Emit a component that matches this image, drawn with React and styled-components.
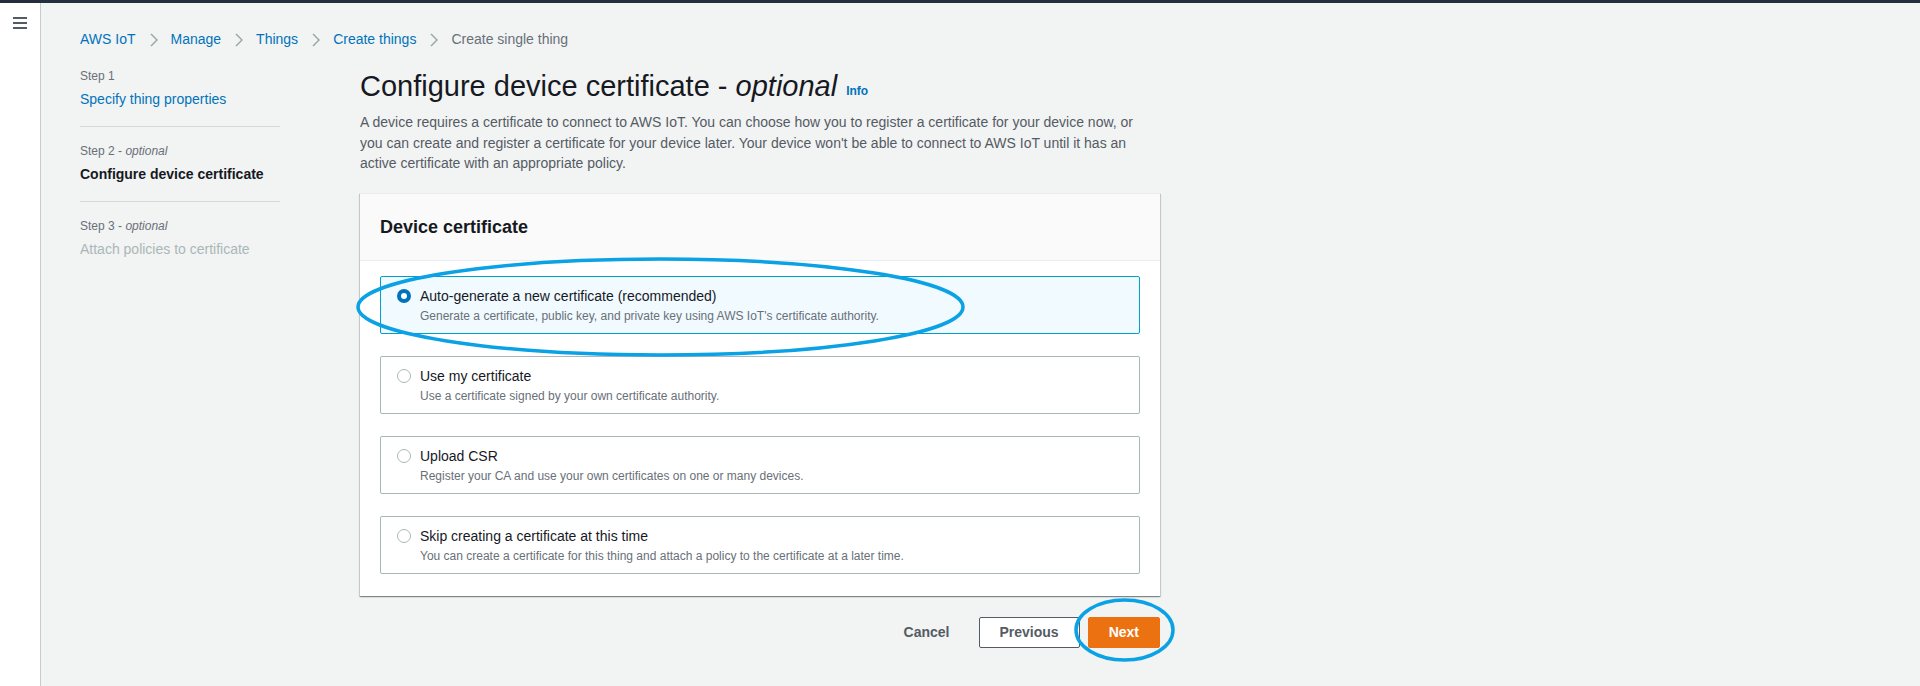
import React from "react";
import styled, { createGlobalStyle, css } from "styled-components";

const GlobalStyle = createGlobalStyle`
  * { box-sizing: border-box; }
  html, body { margin: 0; padding: 0; height: 100%; }
  body {
    background: #f2f3f3;
    color: #16191f;
    font-family: "Liberation Sans", Arial, sans-serif;
    font-size: 14px;
  }
  #root { min-height: 100%; }
`;

const steps = [
  { label: "Step 1", optional: false, title: "Specify thing properties", state: "link" },
  { label: "Step 2", optional: true, title: "Configure device certificate", state: "current" },
  { label: "Step 3", optional: true, title: "Attach policies to certificate", state: "disabled" },
];

const options = [
  {
    title: "Auto-generate a new certificate (recommended)",
    desc: "Generate a certificate, public key, and private key using AWS IoT's certificate authority.",
  },
  {
    title: "Use my certificate",
    desc: "Use a certificate signed by your own certificate authority.",
  },
  {
    title: "Upload CSR",
    desc: "Register your CA and use your own certificates on one or many devices.",
  },
  {
    title: "Skip creating a certificate at this time",
    desc: "You can create a certificate for this thing and attach a policy to the certificate at a later time.",
  },
];

const crumbs = ["AWS IoT", "Manage", "Things", "Create things"];

function Chevron() {
  return (
    <Separator viewBox="0 0 10 14" aria-hidden="true">
      <path d="M2 1 L8 7 L2 13" fill="none" stroke="#95a5a6" strokeWidth="1.4" />
    </Separator>
  );
}

export default function App() {
  const selected = 0;
  return (
    <>
      <GlobalStyle />
      <TopBar />
      <Shell>
        <SideRail>
          <Hamburger aria-label="Open navigation">
            <span />
            <span />
            <span />
          </Hamburger>
        </SideRail>

        <Main>
          <Breadcrumbs>
            {crumbs.map((c) => (
              <React.Fragment key={c}>
                <CrumbLink>{c}</CrumbLink>
                <Chevron />
              </React.Fragment>
            ))}
            <CrumbCurrent>Create single thing</CrumbCurrent>
          </Breadcrumbs>

          <Layout>
            <Nav>
              {steps.map((s, i) => (
                <NavItem key={s.label} $first={i === 0} $last={i === steps.length - 1}>
                  <StepLabel>
                    {s.label}
                    {s.optional && (
                      <>
                        {" - "}
                        <em>optional</em>
                      </>
                    )}
                  </StepLabel>
                  <StepTitle $state={s.state}>{s.title}</StepTitle>
                </NavItem>
              ))}
            </Nav>

            <Content>
              <Heading>
                Configure device certificate - <em>optional</em>
                <InfoLink>Info</InfoLink>
              </Heading>
              <Description>
                A device requires a certificate to connect to AWS IoT. You can choose how you to
                register a certificate for your device now, or you can create and register a
                certificate for your device later. Your device won't be able to connect to AWS IoT
                until it has an active certificate with an appropriate policy.
              </Description>

              <Card>
                <CardHeader>
                  <CardTitle>Device certificate</CardTitle>
                </CardHeader>
                <CardBody>
                  {options.map((o, i) => (
                    <Tile key={o.title} $selected={i === selected}>
                      <Radio $selected={i === selected} />
                      <TileText>
                        <TileTitle>{o.title}</TileTitle>
                        <TileDesc>{o.desc}</TileDesc>
                      </TileText>
                    </Tile>
                  ))}
                </CardBody>
                <Annotation
                  style={{ left: -4, top: 62 }}
                  width="609"
                  height="102"
                  viewBox="0 0 609 102"
                >
                  <ellipse cx="304.5" cy="51" rx="302.5" ry="48" />
                </Annotation>
              </Card>

              <Actions>
                <Button $variant="link">Cancel</Button>
                <Button $variant="normal">Previous</Button>
                <Marked>
                  <Button $variant="primary">Next</Button>
                  <Annotation
                    style={{ left: -14, top: -19 }}
                    width="101"
                    height="64"
                    viewBox="0 0 101 64"
                  >
                    <ellipse cx="50.5" cy="32" rx="48.5" ry="30" />
                  </Annotation>
                </Marked>
              </Actions>
            </Content>
          </Layout>
        </Main>
      </Shell>
    </>
  );
}

const TopBar = styled.div`
  height: 3px;
  background: #232f3e;
`;

const Shell = styled.div`
  display: flex;
  min-height: calc(100vh - 3px);
`;

const SideRail = styled.aside`
  width: 41px;
  flex-shrink: 0;
  background: #ffffff;
  border-right: 1px solid #c6cbcc;
  padding-top: 14px;
`;

const Hamburger = styled.div`
  width: 14px;
  margin: 0 auto;
  display: flex;
  flex-direction: column;
  gap: 3px;

  span {
    display: block;
    height: 2px;
    background: #545b64;
  }
`;

const Main = styled.main`
  flex: 1;
  padding: 26px 40px 40px 39px;
`;

const Breadcrumbs = styled.nav`
  display: flex;
  align-items: center;
  height: 20px;
  line-height: 20px;
  font-size: 14px;
`;

const CrumbLink = styled.a`
  color: #0073bb;
  text-decoration: none;
`;

const CrumbCurrent = styled.span`
  color: #687078;
`;

const Separator = styled.svg`
  width: 10px;
  height: 14px;
  margin: 2px 12px 0 13px;
`;

const Layout = styled.div`
  display: grid;
  grid-template-columns: 200px 800px;
  column-gap: 80px;
  margin-top: 19px;
`;

const Nav = styled.div`
  display: flex;
  flex-direction: column;
`;

const NavItem = styled.div`
  padding: ${(p) => (p.$first ? "0" : "16px")} 0 16px;
  border-bottom: ${(p) => (p.$last ? "none" : "1px solid #d5dbdb")};
`;

const StepLabel = styled.div`
  font-size: 12px;
  line-height: 16px;
  color: #687078;

  em {
    font-style: italic;
  }
`;

const stepStates = {
  link: css`
    color: #0073bb;
  `,
  current: css`
    color: #16191f;
    font-weight: 700;
  `,
  disabled: css`
    color: #aab7b8;
  `,
};

const StepTitle = styled.div`
  margin-top: 4px;
  font-size: 14px;
  line-height: 22px;
  ${(p) => stepStates[p.$state]}
`;

const Content = styled.div`
  display: flex;
  flex-direction: column;
`;

const Heading = styled.h1`
  margin: 0;
  font-size: 29px;
  line-height: 36px;
  font-weight: 400;
  color: #16191f;
`;

const InfoLink = styled.a`
  margin-left: 9px;
  font-size: 12px;
  font-weight: 700;
  color: #0073bb;
  vertical-align: 1px;
`;

const Description = styled.p`
  margin: 3px 0 0;
  max-width: 780px;
  font-size: 14px;
  line-height: 20.5px;
  color: #545b64;
`;

const Card = styled.section`
  position: relative;
  margin-top: 19px;
  background: #ffffff;
  border-top: 1px solid #eaeded;
  box-shadow: 0 1px 1px 0 rgba(0, 28, 36, 0.3), 1px 1px 1px 0 rgba(0, 28, 36, 0.15),
    -1px 1px 1px 0 rgba(0, 28, 36, 0.15);
`;

const CardHeader = styled.header`
  background: #fafafa;
  padding: 21px 20px;
  border-bottom: 1px solid #eaeded;
`;

const CardTitle = styled.h2`
  margin: 0;
  font-size: 18px;
  line-height: 24px;
  font-weight: 700;
`;

const CardBody = styled.div`
  display: flex;
  flex-direction: column;
  gap: 22px;
  padding: 15px 20px 22px;
`;

const Tile = styled.label`
  display: flex;
  align-items: flex-start;
  gap: 9px;
  padding: 8px 16px;
  border-radius: 2px;
  border: 1px solid ${(p) => (p.$selected ? "#00a1c9" : "#aab7b8")};
  background: ${(p) => (p.$selected ? "#f1faff" : "#ffffff")};
  cursor: pointer;
`;

const Radio = styled.span`
  flex-shrink: 0;
  width: 14px;
  height: 14px;
  margin-top: 4px;
  border-radius: 50%;
  background: #ffffff;
  border: ${(p) => (p.$selected ? "4px solid #0073bb" : "1px solid #aab7b8")};
`;

const TileText = styled.div`
  display: flex;
  flex-direction: column;
`;

const TileTitle = styled.span`
  font-size: 14px;
  line-height: 22px;
  color: #16191f;
`;

const TileDesc = styled.span`
  font-size: 12px;
  line-height: 18px;
  color: #687078;
`;

const Actions = styled.div`
  display: flex;
  justify-content: flex-end;
  align-items: center;
  gap: 8px;
  margin-top: 21px;
`;

const buttonVariants = {
  link: css`
    background: transparent;
    border-color: transparent;
    color: #545b64;
  `,
  normal: css`
    background: #ffffff;
    border-color: #545b64;
    color: #545b64;
  `,
  primary: css`
    background: #ec7211;
    border-color: #ec7211;
    color: #ffffff;
  `,
};

const Button = styled.button`
  font-family: inherit;
  font-size: 14px;
  font-weight: 700;
  line-height: 21px;
  padding: 4px 20px;
  border: 1px solid;
  border-radius: 2px;
  cursor: pointer;
  ${(p) => buttonVariants[p.$variant]}
`;

const Marked = styled.span`
  position: relative;
  display: inline-flex;
`;

const Annotation = styled.svg`
  position: absolute;
  overflow: visible;
  pointer-events: none;

  ellipse {
    fill: none;
    stroke: #0aa2e4;
    stroke-width: 3.5;
  }
`;
